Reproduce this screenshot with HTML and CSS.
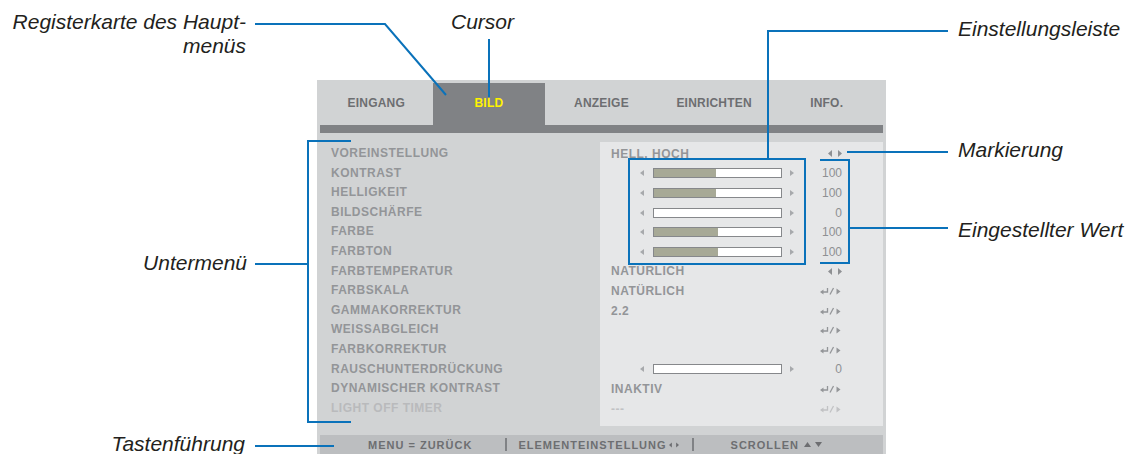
FILE: index.html
```html
<!DOCTYPE html>
<html lang="de">
<head>
<meta charset="UTF-8">
<meta name="viewport" content="width=device-width, initial-scale=1.0">
<title>Menü BILD</title>
<link rel="stylesheet" href="styles.css">
</head>
<body>
<div class="figure">
  <div class="osd">
    <div class="tabs">
      <div class="tab">EINGANG</div>
      <div class="tab active">BILD</div>
      <div class="tab">ANZEIGE</div>
      <div class="tab">EINRICHTEN</div>
      <div class="tab">INFO.</div>
    </div>
    <div class="tab-rule"></div>

    <div class="body">
      <ul class="items">
        <li>VOREINSTELLUNG</li>
        <li>KONTRAST</li>
        <li>HELLIGKEIT</li>
        <li>BILDSCHÄRFE</li>
        <li>FARBE</li>
        <li>FARBTON</li>
        <li>FARBTEMPERATUR</li>
        <li>FARBSKALA</li>
        <li>GAMMAKORREKTUR</li>
        <li>WEISSABGLEICH</li>
        <li>FARBKORREKTUR</li>
        <li>RAUSCHUNTERDRÜCKUNG</li>
        <li>DYNAMISCHER KONTRAST</li>
        <li class="off">LIGHT OFF TIMER</li>
      </ul>

      <div class="values">
        <div class="row">
          <span class="val">HELL. HOCH</span>
          <span class="ind"><svg class="lr" viewBox="0 0 14 7"><polygon points="4,0 0,3.5 4,7"/><polygon points="10,0 14,3.5 10,7"/></svg></span>
        </div>
        <div class="row">
          <div class="slider"><i class="tri-l"></i><div class="bar"><div class="fill" style="width:49%"></div></div><i class="tri-r"></i></div>
          <span class="ind num">100</span>
        </div>
        <div class="row">
          <div class="slider"><i class="tri-l"></i><div class="bar"><div class="fill" style="width:49%"></div></div><i class="tri-r"></i></div>
          <span class="ind num">100</span>
        </div>
        <div class="row">
          <div class="slider"><i class="tri-l"></i><div class="bar"><div class="fill" style="width:0%"></div></div><i class="tri-r"></i></div>
          <span class="ind num">0</span>
        </div>
        <div class="row">
          <div class="slider"><i class="tri-l"></i><div class="bar"><div class="fill" style="width:50%"></div></div><i class="tri-r"></i></div>
          <span class="ind num">100</span>
        </div>
        <div class="row">
          <div class="slider"><i class="tri-l"></i><div class="bar"><div class="fill" style="width:50%"></div></div><i class="tri-r"></i></div>
          <span class="ind num">100</span>
        </div>
        <div class="row">
          <span class="val">NATÜRLICH</span>
          <span class="ind"><svg class="lr" viewBox="0 0 14 7"><polygon points="4,0 0,3.5 4,7"/><polygon points="10,0 14,3.5 10,7"/></svg></span>
        </div>
        <div class="row">
          <span class="val">NATÜRLICH</span>
          <span class="ind"><svg class="enter" viewBox="0 0 22 8"><polygon points="0,5 3.5,2.5 3.5,7.5"/><polyline points="3,5 7.5,5 7.5,1"/><line x1="10" y1="7.5" x2="13.5" y2="1"/><polygon points="16.5,1.5 20.5,4.5 16.5,7.5"/></svg></span>
        </div>
        <div class="row">
          <span class="val">2.2</span>
          <span class="ind"><svg class="enter" viewBox="0 0 22 8"><polygon points="0,5 3.5,2.5 3.5,7.5"/><polyline points="3,5 7.5,5 7.5,1"/><line x1="10" y1="7.5" x2="13.5" y2="1"/><polygon points="16.5,1.5 20.5,4.5 16.5,7.5"/></svg></span>
        </div>
        <div class="row">
          <span class="val"></span>
          <span class="ind"><svg class="enter" viewBox="0 0 22 8"><polygon points="0,5 3.5,2.5 3.5,7.5"/><polyline points="3,5 7.5,5 7.5,1"/><line x1="10" y1="7.5" x2="13.5" y2="1"/><polygon points="16.5,1.5 20.5,4.5 16.5,7.5"/></svg></span>
        </div>
        <div class="row">
          <span class="val"></span>
          <span class="ind"><svg class="enter" viewBox="0 0 22 8"><polygon points="0,5 3.5,2.5 3.5,7.5"/><polyline points="3,5 7.5,5 7.5,1"/><line x1="10" y1="7.5" x2="13.5" y2="1"/><polygon points="16.5,1.5 20.5,4.5 16.5,7.5"/></svg></span>
        </div>
        <div class="row">
          <div class="slider"><i class="tri-l"></i><div class="bar"><div class="fill" style="width:0%"></div></div><i class="tri-r"></i></div>
          <span class="ind num">0</span>
        </div>
        <div class="row">
          <span class="val">INAKTIV</span>
          <span class="ind"><svg class="enter" viewBox="0 0 22 8"><polygon points="0,5 3.5,2.5 3.5,7.5"/><polyline points="3,5 7.5,5 7.5,1"/><line x1="10" y1="7.5" x2="13.5" y2="1"/><polygon points="16.5,1.5 20.5,4.5 16.5,7.5"/></svg></span>
        </div>
        <div class="row off">
          <span class="val">---</span>
          <span class="ind"><svg class="enter" viewBox="0 0 22 8"><polygon points="0,5 3.5,2.5 3.5,7.5"/><polyline points="3,5 7.5,5 7.5,1"/><line x1="10" y1="7.5" x2="13.5" y2="1"/><polygon points="16.5,1.5 20.5,4.5 16.5,7.5"/></svg></span>
        </div>
      </div>
    </div>

    <div class="keys">
      <span class="key-back">MENU = ZURÜCK</span>
      <span class="sep"></span>
      <span class="key-adjust">ELEMENTEINSTELLUNG <svg class="lr" viewBox="0 0 14 7"><polygon points="4,0 0,3.5 4,7"/><polygon points="10,0 14,3.5 10,7"/></svg></span>
      <span class="sep"></span>
      <span class="key-scroll">SCROLLEN <svg class="ud" viewBox="0 0 20 7"><polygon points="0,6 3.5,1 7,6"/><polygon points="11,1 18,1 14.5,6"/></svg></span>
    </div>
  </div>

  <!-- callout lines -->
  <svg class="callouts" viewBox="0 0 1129 454">
    <polyline points="255,24 385,24 446,95"/>
    <line x1="489" y1="39" x2="489" y2="97"/>
    <polyline points="768,159 768,31 948,31"/>
    <rect x="629" y="159" width="176" height="105"/>
    <line x1="847" y1="152" x2="948" y2="152"/>
    <polyline points="820,160 849,160 849,263 820,263"/>
    <line x1="849" y1="228" x2="948" y2="228"/>
    <polyline points="351,141 308,141 308,422 351,422"/>
    <line x1="255" y1="264" x2="308" y2="264"/>
    <line x1="255" y1="446" x2="334" y2="446"/>
  </svg>

  <div class="note note-tab">Registerkarte des Haupt-<br>menüs</div>
  <div class="note note-cursor">Cursor</div>
  <div class="note note-bar">Einstellungsleiste</div>
  <div class="note note-mark">Markierung</div>
  <div class="note note-value">Eingestellter Wert</div>
  <div class="note note-sub">Untermenü</div>
  <div class="note note-keys">Tastenführung</div>
</div>
</body>
</html>
```

FILE: styles.css
```css
body {
  margin: 0;
  background: #fff;
  font-family: "Liberation Sans", Arial, sans-serif;
}
.figure {
  position: relative;
  width: 1129px;
  height: 454px;
  padding-top: 80px;
  box-sizing: border-box;
  overflow: hidden;
}

/* on-screen menu */
.osd {
  margin-left: 317px;
  width: 569px;
  height: 374px;
  padding: 0 3px;
  box-sizing: border-box;
  background: #d1d3d4;
  display: flex;
  flex-direction: column;
}
.tabs {
  height: 45px;
  display: flex;
}
.tab {
  flex: 1;
  display: flex;
  align-items: center;
  justify-content: center;
  font-size: 12px;
  font-weight: bold;
  letter-spacing: 0.2px;
  color: #6d6e71;
}
.tab.active {
  margin-top: 3px;
  padding-bottom: 3px;
  background: #808285;
  color: #fff200;
}
.tab-rule {
  height: 8px;
  background: #808285;
}
.body {
  flex: 1;
  display: flex;
}
.items {
  width: 280px;
  margin: 0;
  padding: 11px 0 0 11px;
  box-sizing: border-box;
  list-style: none;
}
.items li {
  height: 19.6px;
  line-height: 19.6px;
  font-size: 12px;
  font-weight: bold;
  letter-spacing: 0.5px;
  color: #939598;
  white-space: nowrap;
}
.items li.off {
  color: #b9babc;
}
.values {
  flex: 1;
  margin: 9px 0;
  padding: 2px 41px 0 11px;
  background: #e6e7e8;
}
.row {
  height: 19.6px;
  display: flex;
  align-items: center;
  justify-content: space-between;
}
.val {
  font-size: 12px;
  font-weight: bold;
  letter-spacing: 0.5px;
  color: #939598;
}
.ind {
  display: flex;
  align-items: center;
  justify-content: flex-end;
}
.num {
  font-size: 12px;
  color: #8e9093;
}
.row.off .val,
.row.off .ind {
  color: #c1c2c4;
}
.row.off svg {
  fill: #c1c2c4;
  stroke: #c1c2c4;
}

.lr {
  width: 14px;
  height: 7px;
  fill: #8e9093;
}
.enter {
  width: 22px;
  height: 8px;
  fill: #939598;
  stroke: #939598;
  stroke-width: 1.3;
}
.enter polygon {
  stroke: none;
}
.enter polyline,
.enter line {
  fill: none;
}

.slider {
  margin-left: 29px;
  display: flex;
  align-items: center;
}
.tri-l,
.tri-r {
  width: 0;
  height: 0;
  border-top: 3px solid transparent;
  border-bottom: 3px solid transparent;
}
.tri-l {
  border-right: 4px solid #a7a9ac;
}
.tri-r {
  margin-left: 8px;
  border-left: 4px solid #a7a9ac;
}
.bar {
  margin-left: 9px;
  width: 129px;
  height: 10px;
  box-sizing: border-box;
  border: 1px solid #86888b;
  background: #fff;
}
.fill {
  height: 100%;
  background: #a7a996;
}

.keys {
  height: 19px;
  display: flex;
  align-items: center;
  padding-left: 48px;
  background: #bcbec0;
  font-size: 11px;
  font-weight: bold;
  letter-spacing: 1px;
  color: #6d6e71;
  white-space: nowrap;
}
.keys .lr {
  width: 10px;
  height: 6px;
  fill: #6d6e71;
}
.sep {
  width: 2px;
  height: 13px;
  background: #808285;
}
.key-back + .sep {
  margin-left: 33px;
}
.key-adjust {
  margin-left: 11px;
  display: flex;
  align-items: center;
  gap: 2px;
}
.key-adjust + .sep {
  margin-left: 13px;
}
.key-scroll {
  margin-left: 37px;
  display: flex;
  align-items: center;
  gap: 5px;
}
.ud {
  width: 20px;
  height: 7px;
  fill: #6d6e71;
}

/* callouts */
.callouts {
  position: absolute;
  left: 0;
  top: 0;
  width: 1129px;
  height: 454px;
  fill: none;
  stroke: #0a72ba;
  stroke-width: 2;
  pointer-events: none;
}
.note {
  position: absolute;
  font-size: 21px;
  font-style: italic;
  line-height: 24px;
  color: #231f20;
  white-space: nowrap;
}
.note-tab {
  right: 883px;
  top: 10px;
  text-align: right;
}
.note-cursor {
  left: 451px;
  top: 10px;
}
.note-bar {
  left: 958px;
  top: 17px;
}
.note-mark {
  left: 958px;
  top: 138px;
}
.note-value {
  left: 958px;
  top: 218px;
}
.note-sub {
  right: 882px;
  top: 251px;
}
.note-keys {
  right: 884px;
  top: 432px;
}
```
